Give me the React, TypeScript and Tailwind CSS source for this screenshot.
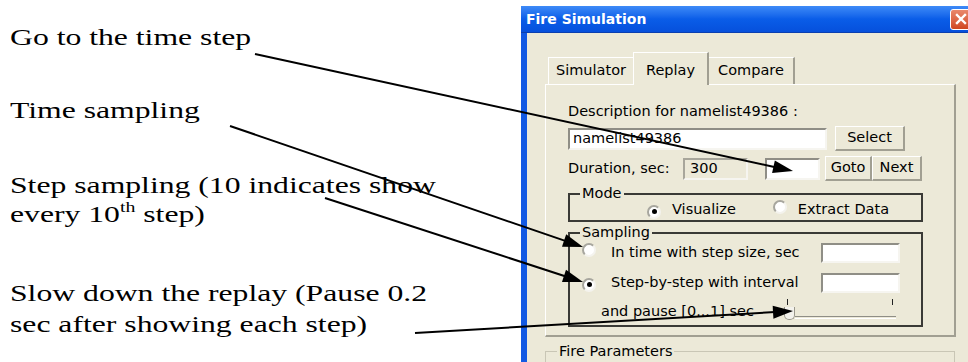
import React from "react";

type P = { x1: number; y1: number; x2: number; y2: number };

function Arrow({ x1, y1, x2, y2 }: P) {
  const dx = x2 - x1;
  const dy = y2 - y1;
  const len = Math.sqrt(dx * dx + dy * dy);
  const ux = dx / len;
  const uy = dy / len;
  const hl = 20;
  const hw = 6.5;
  const bx = x2 - ux * hl;
  const by = y2 - uy * hl;
  const pts = `${x2},${y2} ${bx - uy * hw},${by + ux * hw} ${bx + uy * hw},${by - ux * hw}`;
  return (
    <g>
      <line x1={x1} y1={y1} x2={bx + ux * 2} y2={by + uy * 2} stroke="#000" strokeWidth={2} />
      <polygon points={pts} fill="#000" />
    </g>
  );
}

function Radio({ checked }: { checked?: boolean }) {
  return (
    <span className="inline-flex shrink-0 w-[14px] h-[14px] rounded-full bg-white border-2 border-t-[#a7a69e] border-l-[#a7a69e] border-r-[#f4f3ee] border-b-[#f4f3ee] items-center justify-center">
      {checked && <span className="w-[5px] h-[5px] rounded-full bg-black" />}
    </span>
  );
}

function Btn({ w, h, label }: { w: string; h: string; label: string }) {
  return (
    <div
      className={`${w} ${h} shrink-0 flex items-center justify-center bg-[#ece9d8] border-t border-l border-t-white border-l-white border-r-2 border-b-2 border-r-[#a19f92] border-b-[#a19f92]`}
    >
      {label}
    </div>
  );
}

export default function App() {
  return (
    <div className="relative w-[968px] h-[362px] overflow-hidden bg-white flex">
      {/* left annotations */}
      <div className="w-[521px] shrink-0 flex flex-col pl-[10px] font-['Liberation_Serif',serif] text-[24px] text-black">
        <p className="mt-[23px] leading-[28px] origin-left scale-x-[1.32] whitespace-nowrap">Go to the time step</p>
        <p className="mt-[45px] leading-[28px] origin-left scale-x-[1.32] whitespace-nowrap">Time sampling</p>
        <p className="mt-[47px] leading-[29px] origin-left scale-x-[1.32] whitespace-nowrap">
          Step sampling (10 indicates show
          <br />
          every 10<sup className="text-[15px] leading-none relative -top-[10px]">th</sup> step)
        </p>
        <p className="mt-[49px] leading-[31px] origin-left scale-x-[1.32] whitespace-nowrap">
          Slow down the replay (Pause 0.2
          <br />
          sec after showing each step)
        </p>
      </div>

      {/* dialog */}
      <div className="mt-[6px] w-[460px] shrink-0 flex flex-col font-['DejaVu_Sans',sans-serif] text-[14.5px] text-black">
        <div className="h-[27px] shrink-0 flex items-center justify-between bg-gradient-to-b from-[#3d8af7] via-[#0a5de8] to-[#0650dc] border-b border-b-[#0a3fb0] pl-[5px] pr-[10px]">
          <span className="text-white font-bold text-[14px]">Fire Simulation</span>
          <div className="w-[21px] h-[21px] rounded-[3px] border border-white bg-gradient-to-b from-[#e9886c] to-[#d0451f] flex items-center justify-center">
            <svg width="12" height="12" viewBox="0 0 12 12">
              <path d="M2 2 L10 10 M10 2 L2 10" stroke="#fff" strokeWidth="2.4" strokeLinecap="square" />
            </svg>
          </div>
        </div>

        <div className="flex-1 flex">
          <div className="w-[6px] shrink-0 self-stretch bg-[#1259e3]" />
          <div className="flex-1 bg-[#ece9d8] flex flex-col">
            {/* tabs */}
            <div className="mt-[19px] ml-[21px] h-[32px] flex items-end relative z-10">
              <div className="w-[85px] h-[27px] flex items-center justify-center bg-[#ece9d8] border-t border-l border-t-white border-l-white">
                Simulator
              </div>
              <div className="w-[76px] h-[33px] -mb-[1px] flex items-start pt-[7px] justify-center bg-[#ece9d8] border-t border-l border-t-white border-l-white border-r-2 border-r-[#a19f92]">
                Replay
              </div>
              <div className="w-[86px] h-[27px] flex items-center justify-center bg-[#ece9d8] border-t border-t-white border-r-2 border-r-[#a19f92]">
                Compare
              </div>
            </div>

            {/* panel */}
            <div className="ml-[18px] w-[411px] h-[253px] shrink-0 border-t border-l border-t-white border-l-white border-r-2 border-b-2 border-r-[#a19f92] border-b-[#a19f92] pl-[22px] flex flex-col">
              <div className="mt-[18px] h-[17px] leading-[17px] whitespace-nowrap">Description for namelist49386 :</div>

              <div className="mt-[6px] h-[25px] flex items-center">
                <div className="w-[259px] h-[22px] bg-white border-2 border-t-[#8f8e86] border-l-[#8f8e86] border-r-[#f6f5f0] border-b-[#f6f5f0] flex items-center pl-[3px] leading-none">
                  namelist49386
                </div>
                <div className="ml-[8px]">
                  <Btn w="w-[70px]" h="h-[25px]" label="Select" />
                </div>
              </div>

              <div className="mt-[5px] h-[25px] flex items-center">
                <div className="w-[115px] whitespace-nowrap">Duration, sec:</div>
                <div className="w-[65px] h-[22px] bg-[#ece9d8] border-2 border-t-[#a8a69b] border-l-[#a8a69b] border-r-[#f6f5f0] border-b-[#f6f5f0] flex items-center pl-[5px] leading-none">
                  300
                </div>
                <div className="ml-[17px] w-[55px] h-[22px] bg-white border-2 border-t-[#8f8e86] border-l-[#8f8e86] border-r-[#f6f5f0] border-b-[#f6f5f0]" />
                <div className="ml-[5px] flex">
                  <Btn w="w-[47px]" h="h-[25px]" label="Goto" />
                  <Btn w="w-[50px]" h="h-[25px]" label="Next" />
                </div>
              </div>

              {/* Mode */}
              <fieldset className="mt-[4px] w-[355px] border-2 border-[#3a3a36] px-0 pb-[2px] m-0">
                <legend className="ml-[10px] px-[2px] h-[17px] leading-[17px]">Mode</legend>
                <div className="h-[16px] flex items-center">
                  <span className="ml-[77px]">
                    <Radio checked />
                  </span>
                  <span className="ml-[11px]">Visualize</span>
                  <span className="ml-[37px]">
                    <Radio />
                  </span>
                  <span className="ml-[11px]">Extract Data</span>
                </div>
              </fieldset>

              {/* Sampling */}
              <fieldset className="mt-[2px] w-[355px] border-2 border-[#3a3a36] px-0 pb-[2px] m-0">
                <legend className="ml-[10px] px-[2px] h-[17px] leading-[17px]">Sampling</legend>
                <div className="mt-[1px] h-[22px] flex items-center">
                  <span className="ml-[12px]">
                    <Radio />
                  </span>
                  <span className="ml-[15px] w-[210px] whitespace-nowrap">In time with step size, sec</span>
                  <div className="w-[79px] h-[20px] bg-white border-2 border-t-[#8f8e86] border-l-[#8f8e86] border-r-[#f6f5f0] border-b-[#f6f5f0]" />
                </div>
                <div className="mt-[8px] h-[22px] flex items-center">
                  <span className="ml-[12px]">
                    <Radio checked />
                  </span>
                  <span className="ml-[15px] w-[210px] whitespace-nowrap">Step-by-step with interval</span>
                  <div className="w-[79px] h-[20px] bg-white border-2 border-t-[#8f8e86] border-l-[#8f8e86] border-r-[#f6f5f0] border-b-[#f6f5f0]" />
                </div>
                <div className="mt-[3px] h-[26px] flex items-start">
                  <span className="ml-[31px] mt-[4px] w-[183px] whitespace-nowrap">and pause [0...1] sec</span>
                  {/* slider */}
                  <div className="w-[112px] h-[26px] flex flex-col">
                    <div className="h-[6px] flex justify-between px-[3px] mt-[2px]">
                      <span className="w-[1px] h-[6px] bg-[#222]" />
                      <span className="w-[1px] h-[6px] bg-[#222]" />
                    </div>
                    <div className="mt-[2px] flex items-end">
                      <div className="w-[11px] h-[13px] rounded-b-[5px] border border-[#9a988c] border-t-0 bg-[#f3f2ec]" />
                      <div className="flex-1 h-[3px] mb-[1px] border-t border-t-[#8f8e86] border-b border-b-white" />
                    </div>
                  </div>
                </div>
              </fieldset>
            </div>

            {/* Fire parameters */}
            <fieldset className="mt-[6px] ml-[18px] w-[410px] h-[40px] border border-[#c9c6b5] px-0 m-0">
              <legend className="ml-[11px] px-[2px] h-[17px] leading-[17px]">Fire Parameters</legend>
            </fieldset>
          </div>
        </div>
      </div>

      {/* arrows overlay */}
      <svg className="absolute inset-0 pointer-events-none" width="968" height="362" viewBox="0 0 968 362">
        <Arrow x1={255} y1={54} x2={793} y2={171} />
        <Arrow x1={230} y1={126} x2={583} y2={247} />
        <Arrow x1={325} y1={198} x2={583} y2={282} />
        <Arrow x1={415} y1={333} x2={793} y2={311} />
      </svg>
    </div>
  );
}
